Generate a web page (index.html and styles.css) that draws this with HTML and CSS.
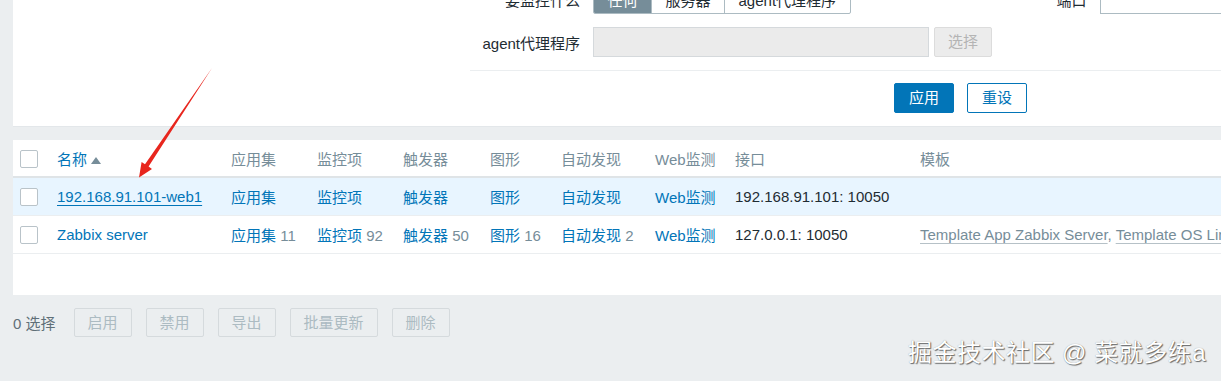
FILE: index.html
```html
<!DOCTYPE html>
<html lang="zh-CN">
<head>
    <meta charset="UTF-8">
    <title>主机</title>
    <link rel="stylesheet" href="styles.css">
</head>
<body>
    <div class="page">
        <div class="filter">
            <div class="filter-form">
                <div class="form-row">
                    <label class="form-label">要监控什么</label>
                    <div class="seg">
                        <span class="seg-item selected">任何</span>
                        <span class="seg-item">服务器</span>
                        <span class="seg-item">agent代理程序</span>
                    </div>
                    <label class="form-label port-label">端口</label>
                    <input class="text-input port-input" type="text">
                </div>
                <div class="form-row">
                    <label class="form-label">agent代理程序</label>
                    <input class="text-input proxy-input" type="text" disabled>
                    <button class="btn btn-disabled select-btn" disabled>选择</button>
                </div>
            </div>
            <div class="filter-actions">
                <button class="btn btn-primary">应用</button>
                <button class="btn btn-alt">重设</button>
            </div>
        </div>

        <div class="list">
            <table class="hosts">
                <colgroup>
                    <col style="width:37px">
                    <col style="width:174px">
                    <col style="width:86px">
                    <col style="width:86px">
                    <col style="width:87px">
                    <col style="width:71px">
                    <col style="width:94px">
                    <col style="width:80px">
                    <col style="width:185px">
                    <col>
                </colgroup>
                <thead>
                    <tr>
                        <th><span class="chk"></span></th>
                        <th><span class="link">名称</span><span class="sort-up"></span></th>
                        <th>应用集</th>
                        <th>监控项</th>
                        <th>触发器</th>
                        <th>图形</th>
                        <th>自动发现</th>
                        <th>Web监测</th>
                        <th>接口</th>
                        <th>模板</th>
                    </tr>
                </thead>
                <tbody>
                    <tr class="hover">
                        <td><span class="chk"></span></td>
                        <td><span class="link underline">192.168.91.101-web1</span></td>
                        <td><span class="link">应用集</span></td>
                        <td><span class="link">监控项</span></td>
                        <td><span class="link">触发器</span></td>
                        <td><span class="link">图形</span></td>
                        <td><span class="link">自动发现</span></td>
                        <td><span class="link">Web监测</span></td>
                        <td>192.168.91.101: 10050</td>
                        <td></td>
                    </tr>
                    <tr>
                        <td><span class="chk"></span></td>
                        <td><span class="link">Zabbix server</span></td>
                        <td><span class="link">应用集</span> <span class="cnt">11</span></td>
                        <td><span class="link">监控项</span> <span class="cnt">92</span></td>
                        <td><span class="link">触发器</span> <span class="cnt">50</span></td>
                        <td><span class="link">图形</span> <span class="cnt">16</span></td>
                        <td><span class="link">自动发现</span> <span class="cnt">2</span></td>
                        <td><span class="link">Web监测</span></td>
                        <td>127.0.0.1: 10050</td>
                        <td class="templates"><span class="tpl">Template App Zabbix Server</span>, <span class="tpl">Template OS Linux</span></td>
                    </tr>
                </tbody>
            </table>
        </div>

        <div class="actions">
            <span class="selected-count">0 选择</span>
            <button class="btn btn-disabled" disabled>启用</button>
            <button class="btn btn-disabled" disabled>禁用</button>
            <button class="btn btn-disabled" disabled>导出</button>
            <button class="btn btn-disabled" disabled>批量更新</button>
            <button class="btn btn-disabled" disabled>删除</button>
        </div>
    </div>

    <!-- annotation arrow drawn over the screenshot -->
    <svg class="arrow" width="1221" height="381" viewBox="0 0 1221 381">
        <polygon points="212,68 148.6,166.6 152,168.9 139,177.5 141.6,162 145,164.2" fill="#e8261e"/>
    </svg>

    <div class="watermark">掘金技术社区 @ 菜就多练a</div>
</body>
</html>
```

FILE: styles.css
```css
body {
    margin: 0;
    width: 1221px;
    height: 381px;
    overflow: hidden;
    position: relative;
    background-color: #ebeef0;
    font-family: "Liberation Sans", "Noto Sans CJK SC", sans-serif;
    font-size: 15px;
    color: #1f2c33;
}
.page {
    margin-top: -16px;
    padding-left: 13px;
}
button, input {
    font-family: inherit;
    font-size: 15px;
}

/* filter */
.filter {
    background-color: #fff;
    border-bottom: 1px solid #e3e7ea;
    overflow: hidden;
}
.filter-form {
    margin-left: 457px;
    display: flex;
    flex-direction: column;
    gap: 13px;
}
.form-row {
    display: flex;
    align-items: center;
    height: 30px;
}
.form-row > * {
    flex: none;
}
.form-label {
    width: 110px;
    margin-right: 13px;
    text-align: right;
    white-space: nowrap;
    color: #1f2c33;
}
.port-label {
    width: 236px;
}
.seg {
    display: flex;
    height: 30px;
    box-sizing: border-box;
    border: 1px solid #acbbc2;
    border-radius: 2px;
    overflow: hidden;
}
.seg-item {
    display: flex;
    align-items: center;
    padding: 0 13.5px;
    border-right: 1px solid #acbbc2;
    white-space: nowrap;
}
.seg-item:last-child {
    border-right: none;
}
.seg-item.selected {
    background-color: #768d99;
    color: #fff;
}
.text-input {
    height: 30px;
    box-sizing: border-box;
    border: 1px solid #acbbc2;
    background: #fff;
    padding: 0 5px;
    margin: 0;
}
.port-input {
    width: 300px;
}
.proxy-input {
    width: 336px;
    background-color: #ebebeb;
    border-color: #d5d9dc;
}
.select-btn {
    margin-left: 5px;
}
.filter-actions {
    margin: 13px 0 0 457px;
    border-top: 1px solid #ebeef0;
    padding: 12px 0 13px 424px;
    display: flex;
    gap: 13px;
}

/* buttons */
.btn {
    height: 30px;
    box-sizing: border-box;
    padding: 0 14px;
    border: 1px solid #0275b8;
    border-radius: 2px;
    background: #fff;
    color: #0275b8;
    line-height: 28px;
    white-space: nowrap;
}
.btn-primary {
    background-color: #0275b8;
    color: #fff;
}
.btn-alt {
    background-color: #fff;
}
.btn-disabled {
    background-color: #ebeef0;
    border-color: #d5dadd;
    color: #acbbc2;
    padding: 0 13px;
    height: 29px;
}
.select-btn.btn-disabled {
    background-color: #ececec;
    border-color: #dcdcdc;
    color: #b4b4b4;
    height: 30px;
}

/* host list */
.list {
    margin-top: 13px;
    background-color: #fff;
    padding-bottom: 41px;
}
.hosts {
    width: 1208px;
    border-collapse: collapse;
    table-layout: fixed;
}
.hosts th,
.hosts td {
    padding: 0 7px;
    text-align: left;
    white-space: nowrap;
    overflow: hidden;
}
.hosts th {
    height: 36px;
    font-weight: normal;
    color: #768d99;
    border-bottom: 2px solid #dfe4e7;
}
.hosts td {
    height: 37px;
    border-bottom: 1px solid #ebeef0;
}
.hosts tr.hover td {
    background-color: #e8f5ff;
}
.chk {
    display: inline-block;
    width: 18px;
    height: 18px;
    box-sizing: border-box;
    border: 1px solid #b9c3c9;
    border-radius: 2px;
    background: #fff;
    vertical-align: middle;
}
.link {
    color: #0275b8;
}
.underline {
    text-decoration: underline;
    text-underline-offset: 3px;
}
.sort-up {
    display: inline-block;
    width: 0;
    height: 0;
    margin-left: 4px;
    border-left: 5px solid transparent;
    border-right: 5px solid transparent;
    border-bottom: 7px solid #768d99;
    vertical-align: 1px;
}
.cnt {
    color: #768d99;
}
.templates {
    color: #768d99;
}
.tpl {
    text-decoration: underline;
    text-decoration-color: #b6c1c7;
    text-underline-offset: 3px;
}

/* mass actions */
.actions {
    margin-top: 13px;
    display: flex;
    align-items: center;
    gap: 14px;
}
.selected-count {
    color: #5f6f78;
    margin-right: 4px;
}

/* overlays */
.arrow {
    position: absolute;
    top: 0;
    left: 0;
    pointer-events: none;
}
.watermark {
    position: absolute;
    right: 15px;
    bottom: 14px;
    font-size: 24px;
    line-height: 28px;
    letter-spacing: 0.5px;
    color: #fff;
    text-shadow: 1px 1px 1px rgba(0, 0, 0, 0.55), 0 0 1px rgba(0, 0, 0, 0.35);
    white-space: nowrap;
}
```
